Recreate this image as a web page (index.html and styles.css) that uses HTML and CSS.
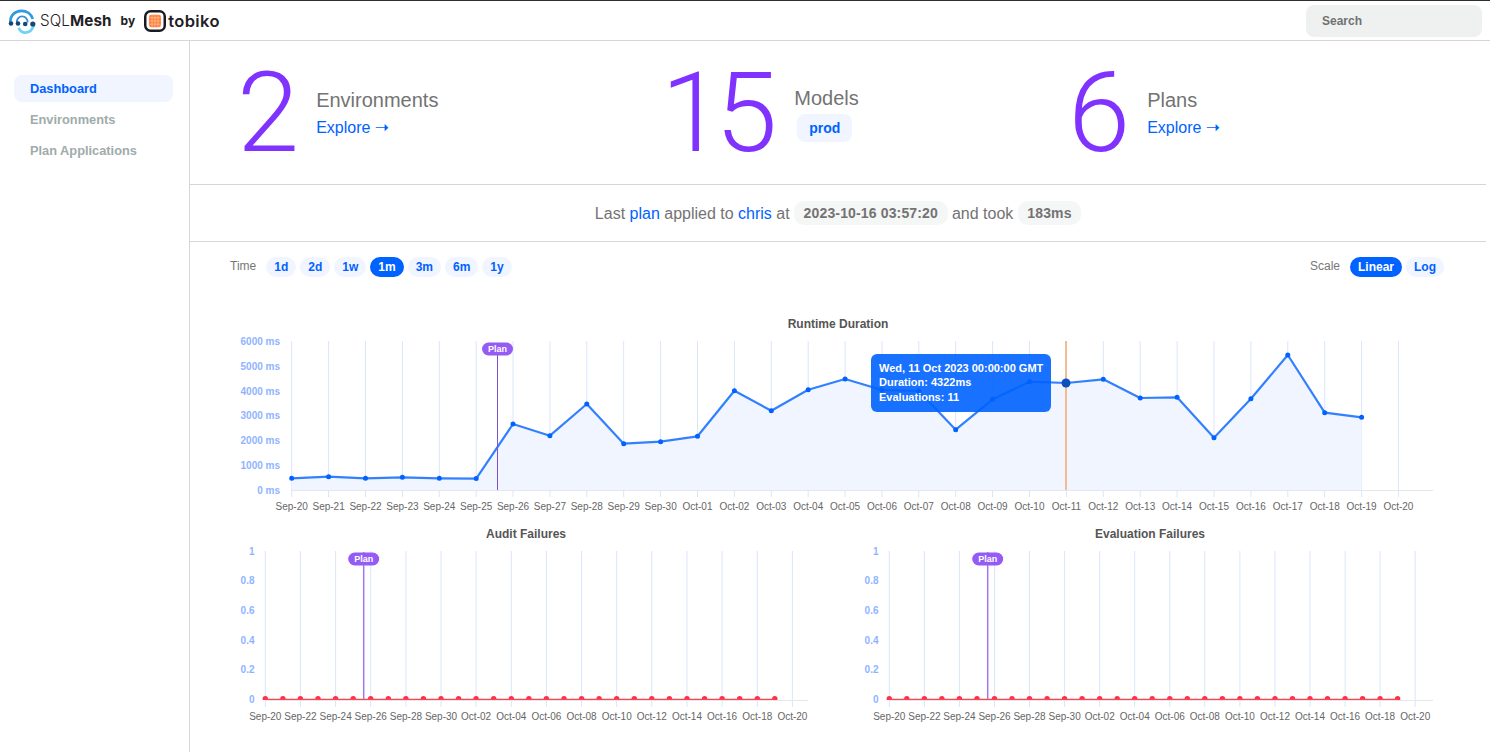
FILE: index.html
```html
<!DOCTYPE html>
<html lang="en">
<head>
<meta charset="utf-8">
<title>SQLMesh Dashboard</title>
<link rel="stylesheet" href="styles.css">
</head>
<body>
<header class="topbar">
  <div class="brand">
    <svg class="mesh-icon" viewBox="0 0 28 26" width="28" height="26" aria-hidden="true">
      <path d="M2.4 14C2 7.5 7 2.8 13.4 2.8c5.6 0 10 3.2 11.4 8.2" fill="none" stroke="#2f9be0" stroke-width="2.7"/>
      <path d="M10.5 20c2 3.4 4.6 4.8 7 4.6 4-.3 7-3 8-7" fill="none" stroke="#6fd4f4" stroke-width="2.7"/>
      <path d="M8.8 14.5C8.6 11 11 8.4 14.2 8.4s5.6 2.4 5.4 6.1" fill="none" stroke="#3f8ccc" stroke-width="1.8"/>
      <g fill="#14477e"><circle cx="3" cy="15.5" r="2.3"/><circle cx="10" cy="15.5" r="2.3"/><circle cx="17.2" cy="16" r="2.3"/><circle cx="24.8" cy="16" r="2.6"/></g>
    </svg>
    <span class="brand-name">SQL<b>Mesh</b></span>
    <span class="brand-by">by</span>
    <svg class="tobiko-icon" viewBox="0 0 23 23" width="22" height="22" aria-hidden="true">
      <rect x="1.3" y="1.3" width="20.4" height="20.4" rx="5.5" fill="#fff" stroke="#1b1b1f" stroke-width="2.6"/>
      <rect x="5.2" y="5" width="12.6" height="13" rx="2.5" fill="#ff7a33"/>
      <path d="M8.4 5v13M11.5 5v13M14.6 5v13M5.2 8.2h12.6M5.2 11.5h12.6M5.2 14.8h12.6" stroke="#ffc29e" stroke-width=".8"/>
    </svg>
    <span class="tobiko-name">tobiko</span>
  </div>
  <div class="search">Search</div>
</header>
<div class="layout">
  <aside class="sidebar">
    <a class="nav-item active">Dashboard</a>
    <a class="nav-item">Environments</a>
    <a class="nav-item">Plan Applications</a>
  </aside>
  <main class="content">
    <section class="stats">
      <div class="stat">
        <span class="stat-num">2</span>
        <div class="stat-body">
          <div class="stat-label">Environments</div>
          <a class="stat-link">Explore <span class="arrow">➝</span></a>
        </div>
      </div>
      <div class="stat">
        <span class="stat-num"><span class="tight">1</span>5</span>
        <div class="stat-body models">
          <div class="stat-label">Models</div>
          <span class="env-chip">prod</span>
        </div>
      </div>
      <div class="stat">
        <span class="stat-num">6</span>
        <div class="stat-body">
          <div class="stat-label">Plans</div>
          <a class="stat-link">Explore <span class="arrow">➝</span></a>
        </div>
      </div>
    </section>
    <section class="last-plan">
      <p class="last-plan-text">Last <a>plan</a> applied to <a>chris</a> at <span class="mono-chip">2023-10-16 03:57:20</span> and took <span class="mono-chip">183ms</span></p>
    </section>
    <section class="filters">
      <div class="filter-group">
        <span class="filter-label">Time</span>
        <span class="pill">1d</span><span class="pill">2d</span><span class="pill">1w</span><span class="pill on">1m</span><span class="pill">3m</span><span class="pill">6m</span><span class="pill">1y</span>
      </div>
      <div class="filter-group">
        <span class="filter-label">Scale</span>
        <span class="pill on">Linear</span><span class="pill">Log</span>
      </div>
    </section>

    <svg class="chart-main" viewBox="190 290 1296 235" width="1296" height="235">
      <text class="chart-title" x="838" y="328">Runtime Duration</text>
      <path class="grid" d="M291.7 341V497M328.6 341V497M365.5 341V497M402.4 341V497M439.3 341V497M476.2 341V497M513 341V497M549.9 341V497M586.8 341V497M623.7 341V497M660.6 341V497M697.5 341V497M734.4 341V497M771.3 341V497M808.2 341V497M845.1 341V497M882 341V497M918.8 341V497M955.7 341V497M992.6 341V497M1029.5 341V497M1066.4 341V497M1103.3 341V497M1140.2 341V497M1177.1 341V497M1214 341V497M1250.9 341V497M1287.8 341V497M1324.7 341V497M1361.6 341V497M1398.4 341V497"/>
      <path class="area" d="M291.7 478.3L328.6 476.7L365.5 478.3L402.4 477.3L439.3 478.3L476.2 478.6L513 424L549.9 435.7L586.8 404L623.7 443.7L660.6 441.7L697.5 436.3L734.4 390.7L771.3 410.7L808.2 389.7L845.1 379L882 390L918.8 391L955.7 429.7L992.6 399.3L1029.5 381.7L1066.4 383L1103.3 379.3L1140.2 398L1177.1 397.3L1214 437.7L1250.9 398.7L1287.8 355L1324.7 412.7L1361.6 417.3V490H291.7Z"/>
      <path class="axis" d="M291 490.5H1433"/>
      <path class="line" d="M291.7 478.3L328.6 476.7L365.5 478.3L402.4 477.3L439.3 478.3L476.2 478.6L513 424L549.9 435.7L586.8 404L623.7 443.7L660.6 441.7L697.5 436.3L734.4 390.7L771.3 410.7L808.2 389.7L845.1 379L882 390L918.8 391L955.7 429.7L992.6 399.3L1029.5 381.7L1066.4 383L1103.3 379.3L1140.2 398L1177.1 397.3L1214 437.7L1250.9 398.7L1287.8 355L1324.7 412.7L1361.6 417.3"/>
      <path class="dots" d="M291.7 478.3h0M328.6 476.7h0M365.5 478.3h0M402.4 477.3h0M439.3 478.3h0M476.2 478.6h0M513 424h0M549.9 435.7h0M586.8 404h0M623.7 443.7h0M660.6 441.7h0M697.5 436.3h0M734.4 390.7h0M771.3 410.7h0M808.2 389.7h0M845.1 379h0M882 390h0M918.8 391h0M955.7 429.7h0M992.6 399.3h0M1029.5 381.7h0M1103.3 379.3h0M1140.2 398h0M1177.1 397.3h0M1214 437.7h0M1250.9 398.7h0M1287.8 355h0M1324.7 412.7h0M1361.6 417.3h0"/>
      <path class="plan-line dark" d="M497.5 345V490"/>
      <rect class="plan-badge" x="482" y="342.5" width="31" height="13" rx="6.5"/>
      <text class="plan-text" x="497.5" y="352.3">Plan</text>
      <path class="cross" d="M1066 341V490"/>
      <circle class="focus" cx="1066" cy="383" r="4.5"/>
      <rect class="tip" x="871" y="354" width="180" height="58" rx="6"/>
      <text class="tip-text" x="879" y="372">Wed, 11 Oct 2023 00:00:00 GMT</text>
      <text class="tip-text" x="879" y="386">Duration: 4322ms</text>
      <text class="tip-text" x="879" y="401">Evaluations: 11</text>
      <g class="ylabels">
        <text x="280" y="344.5">6000 ms</text><text x="280" y="369.5">5000 ms</text><text x="280" y="394.5">4000 ms</text><text x="280" y="419">3000 ms</text><text x="280" y="444">2000 ms</text><text x="280" y="469">1000 ms</text><text x="280" y="493.5">0 ms</text>
      </g>
      <g class="xlabels">
        <text x="291.7" y="510">Sep-20</text><text x="328.6" y="510">Sep-21</text><text x="365.5" y="510">Sep-22</text><text x="402.4" y="510">Sep-23</text><text x="439.3" y="510">Sep-24</text><text x="476.2" y="510">Sep-25</text><text x="513" y="510">Sep-26</text><text x="549.9" y="510">Sep-27</text><text x="586.8" y="510">Sep-28</text><text x="623.7" y="510">Sep-29</text><text x="660.6" y="510">Sep-30</text><text x="697.5" y="510">Oct-01</text><text x="734.4" y="510">Oct-02</text><text x="771.3" y="510">Oct-03</text><text x="808.2" y="510">Oct-04</text><text x="845.1" y="510">Oct-05</text><text x="882" y="510">Oct-06</text><text x="918.8" y="510">Oct-07</text><text x="955.7" y="510">Oct-08</text><text x="992.6" y="510">Oct-09</text><text x="1029.5" y="510">Oct-10</text><text x="1066.4" y="510">Oct-11</text><text x="1103.3" y="510">Oct-12</text><text x="1140.2" y="510">Oct-13</text><text x="1177.1" y="510">Oct-14</text><text x="1214" y="510">Oct-15</text><text x="1250.9" y="510">Oct-16</text><text x="1287.8" y="510">Oct-17</text><text x="1324.7" y="510">Oct-18</text><text x="1361.6" y="510">Oct-19</text><text x="1398.4" y="510">Oct-20</text>
      </g>
    </svg>

    <div class="chart-row">
      <svg class="chart-small" viewBox="190 525 648 210" width="648" height="210">
        <defs><clipPath id="clip-audit"><rect x="250" y="690" width="560" height="10"/></clipPath></defs>
        <text class="chart-title" x="526" y="538">Audit Failures</text>
        <path class="grid" d="M265.3 551V707M300.4 551V707M335.6 551V707M370.7 551V707M405.9 551V707M441 551V707M476.1 551V707M511.3 551V707M546.4 551V707M581.6 551V707M616.7 551V707M651.8 551V707M687 551V707M722.1 551V707M757.3 551V707M792.4 551V707"/>
        <path class="axis" d="M265 700.5H808"/>
        <path class="fail-dots" clip-path="url(#clip-audit)" d="M265.3 698.8h0M282.9 698.8h0M300.4 698.8h0M318 698.8h0M335.6 698.8h0M353.2 698.8h0M370.7 698.8h0M388.3 698.8h0M405.9 698.8h0M423.4 698.8h0M441 698.8h0M458.6 698.8h0M476.1 698.8h0M493.7 698.8h0M511.3 698.8h0M528.9 698.8h0M546.4 698.8h0M564 698.8h0M581.6 698.8h0M599.1 698.8h0M616.7 698.8h0M634.3 698.8h0M651.8 698.8h0M669.4 698.8h0M687 698.8h0M704.6 698.8h0M722.1 698.8h0M739.7 698.8h0M757.3 698.8h0M774.8 698.8h0"/>
        <path class="fail-line" d="M265.3 699.4H774.8"/>
        <path class="plan-line" d="M363.7 552V699"/>
        <rect class="plan-badge" x="348.2" y="552.5" width="31" height="13" rx="6.5"/>
        <text class="plan-text" x="363.7" y="562.3">Plan</text>
        <g class="ylabels">
          <text x="254.5" y="555">1</text><text x="254.5" y="584">0.8</text><text x="254.5" y="614">0.6</text><text x="254.5" y="644">0.4</text><text x="254.5" y="673">0.2</text><text x="254.5" y="703">0</text>
        </g>
        <g class="xlabels">
          <text x="265.3" y="720">Sep-20</text><text x="300.4" y="720">Sep-22</text><text x="335.6" y="720">Sep-24</text><text x="370.7" y="720">Sep-26</text><text x="405.9" y="720">Sep-28</text><text x="441" y="720">Sep-30</text><text x="476.1" y="720">Oct-02</text><text x="511.3" y="720">Oct-04</text><text x="546.4" y="720">Oct-06</text><text x="581.6" y="720">Oct-08</text><text x="616.7" y="720">Oct-10</text><text x="651.8" y="720">Oct-12</text><text x="687" y="720">Oct-14</text><text x="722.1" y="720">Oct-16</text><text x="757.3" y="720">Oct-18</text><text x="792.4" y="720">Oct-20</text>
        </g>
      </svg>
      <svg class="chart-small" viewBox="838 525 648 210" width="648" height="210">
        <defs><clipPath id="clip-eval"><rect x="875" y="690" width="560" height="10"/></clipPath></defs>
        <text class="chart-title" x="1150" y="538">Evaluation Failures</text>
        <path class="grid" d="M889.3 551V707M924.4 551V707M959.4 551V707M994.5 551V707M1029.5 551V707M1064.6 551V707M1099.7 551V707M1134.7 551V707M1169.8 551V707M1204.8 551V707M1239.9 551V707M1275 551V707M1310 551V707M1345.1 551V707M1380.1 551V707M1415.2 551V707"/>
        <path class="axis" d="M889 700.5H1433"/>
        <path class="fail-dots" clip-path="url(#clip-eval)" d="M889.3 698.8h0M906.8 698.8h0M924.4 698.8h0M941.9 698.8h0M959.4 698.8h0M977 698.8h0M994.5 698.8h0M1012 698.8h0M1029.5 698.8h0M1047.1 698.8h0M1064.6 698.8h0M1082.1 698.8h0M1099.7 698.8h0M1117.2 698.8h0M1134.7 698.8h0M1152.2 698.8h0M1169.8 698.8h0M1187.3 698.8h0M1204.8 698.8h0M1222.4 698.8h0M1239.9 698.8h0M1257.4 698.8h0M1275 698.8h0M1292.5 698.8h0M1310 698.8h0M1327.5 698.8h0M1345.1 698.8h0M1362.6 698.8h0M1380.1 698.8h0M1397.6 698.8h0"/>
        <path class="fail-line" d="M889.3 699.4H1397.6"/>
        <path class="plan-line" d="M987.7 552V699"/>
        <rect class="plan-badge" x="972.2" y="552.5" width="31" height="13" rx="6.5"/>
        <text class="plan-text" x="987.7" y="562.3">Plan</text>
        <g class="ylabels">
          <text x="878.5" y="555">1</text><text x="878.5" y="584">0.8</text><text x="878.5" y="614">0.6</text><text x="878.5" y="644">0.4</text><text x="878.5" y="673">0.2</text><text x="878.5" y="703">0</text>
        </g>
        <g class="xlabels">
          <text x="889.3" y="720">Sep-20</text><text x="924.4" y="720">Sep-22</text><text x="959.4" y="720">Sep-24</text><text x="994.5" y="720">Sep-26</text><text x="1029.5" y="720">Sep-28</text><text x="1064.6" y="720">Sep-30</text><text x="1099.7" y="720">Oct-02</text><text x="1134.7" y="720">Oct-04</text><text x="1169.8" y="720">Oct-06</text><text x="1204.8" y="720">Oct-08</text><text x="1239.9" y="720">Oct-10</text><text x="1275" y="720">Oct-12</text><text x="1310" y="720">Oct-14</text><text x="1345.1" y="720">Oct-16</text><text x="1380.1" y="720">Oct-18</text><text x="1415.2" y="720">Oct-20</text>
        </g>
      </svg>
    </div>
  </main>
</div>
</body>
</html>
```
FILE: styles.css
```css
* { box-sizing: border-box; }
html, body { margin: 0; height: 752px; overflow: hidden; background: #fff; }
body { font-family: "Liberation Sans", Arial, sans-serif; color: #737373; }

.topbar {
  height: 41px;
  border-top: 1px solid #2e2e2e;
  border-bottom: 1px solid #d6d6d6;
  display: flex;
  align-items: center;
  justify-content: space-between;
  padding: 0 8px 0 8px;
}
.brand { display: flex; align-items: center; font-family: Inter, "Liberation Sans", sans-serif; color: #1f2126; }
.mesh-icon { display: block; }
.brand-name { font-size: 15.2px; font-weight: 300; margin-left: 4px; letter-spacing: .1px; }
.brand-name b { font-weight: 700; }
.brand-by { font-size: 12px; font-weight: 700; margin-left: 9px; }
.tobiko-icon { display: block; margin-left: 9px; }
.tobiko-name { font-size: 16.5px; font-weight: 600; margin-left: 2px; letter-spacing: .4px; }
.search {
  width: 176px;
  height: 32px;
  border-radius: 8px;
  background: #eff0f0;
  font-size: 12px;
  font-weight: 700;
  line-height: 32px;
  padding-left: 16px;
  color: #6f7272;
}

.layout { display: flex; height: 711px; }
.sidebar {
  width: 190px;
  flex: none;
  border-right: 1px solid #d6d6d6;
  padding: 34px 16px 0 14px;
  display: flex;
  flex-direction: column;
  gap: 4px;
}
.nav-item {
  display: block;
  height: 27px;
  line-height: 27px;
  padding-left: 16px;
  border-radius: 8px;
  font-size: 12.8px;
  font-weight: 700;
  color: #a0abab;
}
.nav-item.active { background: #f0f5ff; color: #0062ff; }

.content { width: 1296px; flex: none; }
.stats {
  height: 144px;
  border-bottom: 1px solid #d6d6d6;
  display: grid;
  grid-template-columns: 424px 407px auto;
  align-items: center;
  padding-left: 47px;
}
.stat { display: flex; align-items: center; }
.stat-num {
  font-family: Roboto, "Liberation Sans", sans-serif;
  font-weight: 300;
  font-size: 112px;
  line-height: 1;
  color: #8033ff;
  margin-right: 17px;
}
.tight { letter-spacing: -8px; }
.stat-body { padding-top: 4px; }
.stat-body.models { padding-top: 2px; }
.stat-label { font-size: 20px; line-height: 26px; color: #737373; }
.stat-link { display: block; font-size: 16px; line-height: 28px; color: #0062ff; }
.arrow { font-family: "DejaVu Sans", sans-serif; font-size: 17px; }
.env-chip {
  display: inline-block;
  margin: 3px 0 0 3px;
  height: 28px;
  line-height: 28px;
  padding: 0 12px;
  border-radius: 8px;
  background: #f0f5ff;
  color: #0062ff;
  font-size: 14px;
  font-weight: 700;
}

.last-plan {
  height: 57px;
  border-bottom: 1px solid #d6d6d6;
}
.last-plan-text {
  margin: 0;
  line-height: 57px;
  text-align: center;
  font-size: 16px;
}
.last-plan a { color: #0062ff; }
.mono-chip {
  display: inline-block;
  height: 24px;
  line-height: 24px;
  padding: 0 9.5px;
  border-radius: 10px;
  background: #f5f6f6;
  font-size: 14px;
  font-weight: 700;
  letter-spacing: .15px;
  vertical-align: 1px;
}

.filters {
  height: 48px;
  padding: 15px 42px 0 40px;
  display: flex;
  justify-content: space-between;
}
.filter-group { display: flex; align-items: flex-start; gap: 4px; }
.filter-label { font-size: 12px; line-height: 18px; margin-right: 6px; color: #777; }
.pill {
  height: 20px;
  line-height: 20px;
  padding: 0 8px;
  border-radius: 10px;
  background: #f0f5ff;
  color: #0062ff;
  font-size: 12px;
  font-weight: 700;
}
.pill.on { background: #0062ff; color: #fff; }

.chart-main, .chart-small { display: block; }
.chart-row { display: flex; }
svg text { font-family: "Liberation Sans", Arial, sans-serif; }
.chart-title { font-size: 12px; font-weight: 700; fill: #555; text-anchor: middle; }
.grid { stroke: #dbe6fd; stroke-width: 1; fill: none; }
.axis { stroke: #e5e7eb; stroke-width: 1; fill: none; }
.area { fill: #f0f5ff; }
.line { stroke: #3380ff; stroke-width: 2.2; fill: none; stroke-linejoin: round; }
.dots { stroke: #0062ff; stroke-width: 5; stroke-linecap: round; fill: none; }
.plan-line { stroke: #a078ee; stroke-width: 1.5; fill: none; }
.plan-line.dark { stroke: #7c52cc; stroke-width: 1; }
.plan-badge { fill: #955cf5; }
.plan-text { font-size: 9px; font-weight: 700; fill: #fff; text-anchor: middle; }
.cross { stroke: #f2bb90; stroke-width: 2; fill: none; }
.focus { fill: #0c50c0; }
.tip { fill: #0062ff; fill-opacity: .9; }
.tip-text { font-size: 11px; font-weight: 700; fill: #fff; }
.ylabels text { font-size: 10px; font-weight: 700; fill: #8fb4ff; text-anchor: end; }
.xlabels text { font-size: 10px; fill: #666; text-anchor: middle; }
.fail-line { stroke: #ff4050; stroke-width: 1.2; fill: none; }
.fail-dots { stroke: #ff3048; stroke-width: 5.4; stroke-linecap: round; fill: none; }
```
